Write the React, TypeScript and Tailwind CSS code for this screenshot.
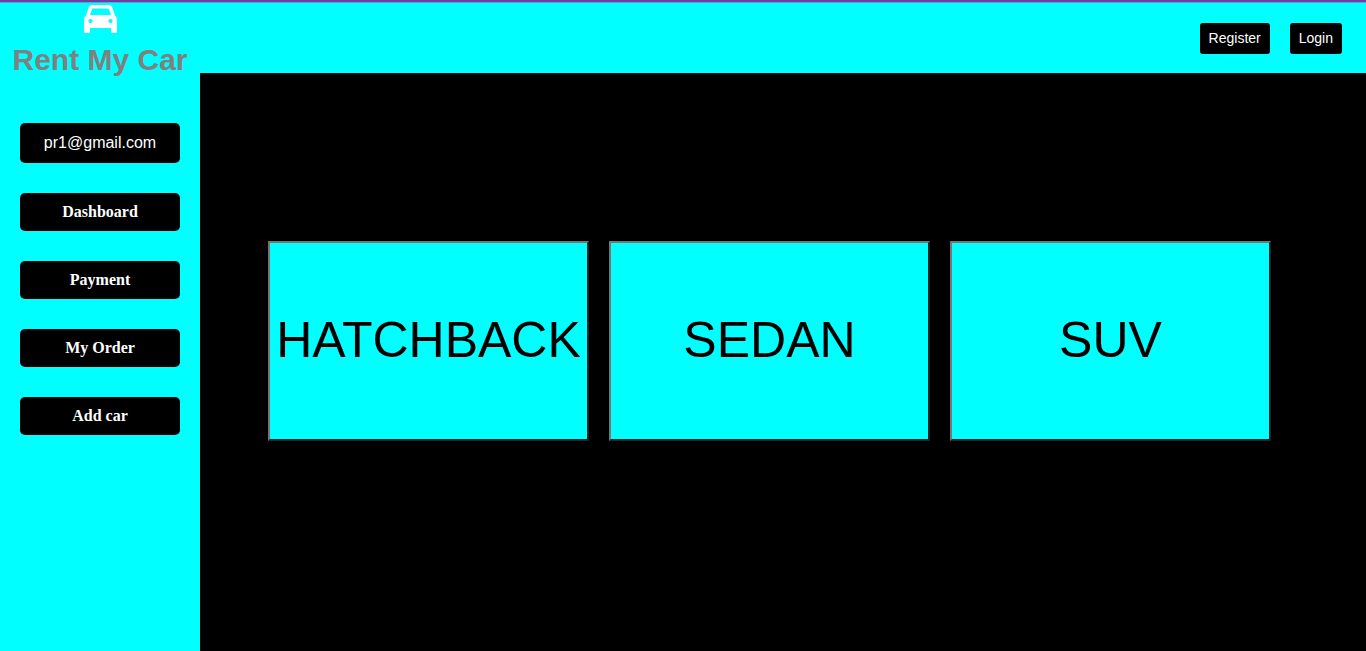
const menuItems = ["Dashboard", "Payment", "My Order", "Add car"];
const carTypes = ["HATCHBACK", "SEDAN", "SUV"];

function CarIcon() {
  return (
    <svg viewBox="0 0 33 28" className="mt-0.5 h-7 w-[33px] text-white" fill="currentColor" aria-hidden="true">
      <path
        fillRule="evenodd"
        d="M8.5 0H24.5Q27.6 0 28.5 3L31 10.5Q33 12 33 14.5V26.5Q33 28 31.5 28H28.5Q27 28 27 26.5V23H6V26.5Q6 28 4.500 28H1.500Q0 28 0 26.500V14.500Q0 12 2 10.500L4.500 3Q5.400 0 8.500 0ZM9.500 3.500Q8.200 3.500 7.800 4.700L6 10H27L25.200 4.700Q24.800 3.500 23.500 3.500ZM6.500 14A2.100 2.100 0 1 0 6.500 18.200A2.100 2.100 0 1 0 6.500 14ZM26.500 14A2.100 2.100 0 1 0 26.500 18.200A2.100 2.100 0 1 0 26.500 14Z"
      />
    </svg>
  );
}

function Sidebar() {
  return (
    <aside className="flex w-[200px] shrink-0 flex-col bg-[#00ffff]">
      <div className="flex flex-col items-center">
        <CarIcon />
        <h1 className="mt-[9px] whitespace-nowrap text-[30px] leading-9 font-bold text-[#808080]">Rent My Car</h1>
      </div>
      <div className="mx-5 mt-[45px] rounded-[5px] bg-black py-2 text-center text-base leading-6 text-white">
        pr1@gmail.com
      </div>
      <nav className="mx-5 mt-[30px] flex flex-col gap-[30px]">
        {menuItems.map((item) => (
          <a
            key={item}
            href="#"
            className="rounded-[5px] bg-black py-[10px] text-center font-['Liberation_Serif',serif] text-base leading-[18px] font-bold text-white"
          >
            {item}
          </a>
        ))}
      </nav>
    </aside>
  );
}

function Header() {
  return (
    <header className="flex h-[70px] items-center justify-end gap-5 bg-[#00ffff] pr-6">
      {["Register", "Login"].map((label) => (
        <button
          key={label}
          type="button"
          className="rounded-[3px] bg-black px-[9px] py-[5px] text-sm leading-[21px] text-white"
        >
          {label}
        </button>
      ))}
    </header>
  );
}

export default function App() {
  return (
    <div className="flex min-h-screen flex-col border-t-2 border-[#6b3fa0] bg-black font-['Liberation_Sans',Arial,sans-serif]">
      <div className="flex flex-1 border-t border-[#5f9fd8]">
        <Sidebar />
        <div className="flex min-w-0 flex-1 flex-col">
          <Header />
          <main className="grid grid-cols-3 gap-5 pt-[168px] pr-[95px] pl-[68px]">
            {carTypes.map((type) => (
              <button
                key={type}
                type="button"
                className="flex h-[200px] items-center justify-center border-2 border-t-[#767676] border-r-[#212121] border-b-[#212121] border-l-[#767676] bg-[#00ffff] pb-0.5 text-[50px] leading-none text-black"
              >
                {type}
              </button>
            ))}
          </main>
        </div>
      </div>
    </div>
  );
}
